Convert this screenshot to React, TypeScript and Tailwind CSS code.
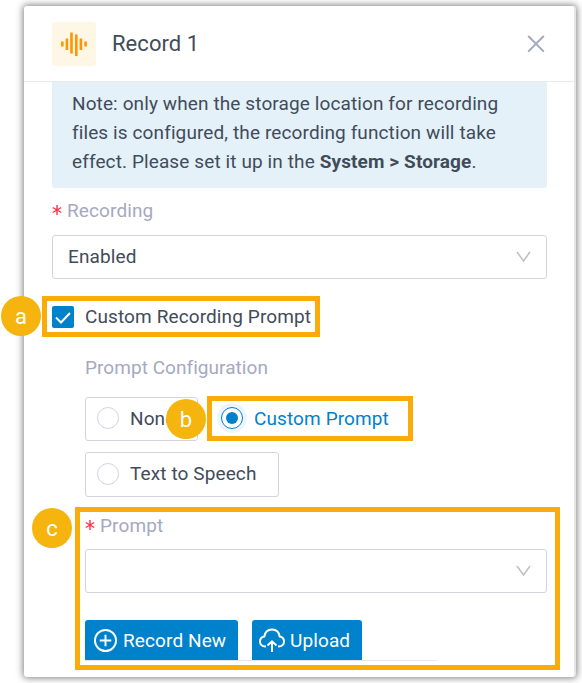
import type { ReactNode } from "react";

function Badge({ children, className }: { children: string; className: string }) {
  return (
    <span className={`absolute flex size-10 items-center justify-center rounded-full bg-[#f5b40e] pt-px text-[22px] leading-none tracking-normal text-white ${className}`}>
      {children}
    </span>
  );
}

function Highlight({ className }: { className: string }) {
  return <div className={`pointer-events-none absolute border-[5px] border-[#f9ab0a] ${className}`} />;
}

function Label({ children }: { children: string }) {
  return (
    <div className="flex h-7 items-center pb-[2px] text-[#a5a9bf]">
      <svg viewBox="0 0 10 10" className="mr-[5px] size-[10px] fill-none stroke-[#ff3347] stroke-[1.4]">
        <path d="M5 0v10M.7 2.5l8.6 5M.7 7.5l8.6-5" />
      </svg>
      {children}
    </div>
  );
}

function Select({ value }: { value: string }) {
  return (
    <div className="flex h-11 items-center justify-between rounded-[3px] border border-[#d4d4e1] pr-[15px] pl-[15px]">
      <span className="pb-[2px]">{value}</span>
      <svg viewBox="0 0 15 12" className="h-3 w-[15px] fill-none stroke-[#bfbfc2] stroke-[1.5]">
        <path d="M1 1l6.5 9L14 1" />
      </svg>
    </div>
  );
}

function Radio({ children, checked = false, className }: { children: string; checked?: boolean; className: string }) {
  return (
    <div className={`flex items-center rounded-[3px] border pl-[11px] ${checked ? "border-transparent text-[#0081cc]" : "border-[#d4d4e1] pb-[2px]"} ${className}`}>
      <span className={`mr-[11px] flex size-[22px] shrink-0 items-center justify-center rounded-full border bg-white ${checked ? "border-[#0081cc] ring-4 ring-[#ebf5ff]" : "border-[#d4d4e1]"}`}>
        {checked && <span className="size-3 rounded-full bg-[#0081cc]" />}
      </span>
      {children}
    </div>
  );
}

function Button({ icon, children, className }: { icon: ReactNode; children: string; className: string }) {
  return (
    <button className={`flex h-10 items-center rounded-t-[3px] bg-[#0081cc] text-white ${className}`}>
      {icon}
      {children}
    </button>
  );
}

export default function App() {
  return (
    <div className="relative h-[683px] w-[582px] overflow-hidden bg-white pt-[6px] pl-6 font-['Roboto',sans-serif] text-[19px] leading-[29px] tracking-[0.11px] text-[#424b5a]">
      <section className="h-[671px] w-[552px] rounded-[3px] border-r-2 border-[#e6e6e7] bg-white shadow-[0_0_7px_1px_rgba(0,0,0,0.5)]">
        <header className="flex h-[76px] items-center border-b border-[#e9e9ee] pr-[30px] pl-7">
          <div className="mr-4 flex size-11 items-center justify-center rounded-[3px] bg-[#fff7e6]">
            <svg viewBox="0 0 26 24" className="h-6 w-[26px] fill-[#ff9500]">
              <path d="M0 9.500h2.600v5H0zM4.600 6.500h2.600v11.500H4.600zM9.200.5h2.600v21H9.200zM14 2.500h2.600v21.500H14zM18.600 6.500h2.600v11.500h-2.600zM23.300 9.500h2.600v5h-2.600z" />
            </svg>
          </div>
          <h1 className="flex-1 text-[22px] tracking-[0.05px]">Record 1</h1>
          <svg viewBox="0 0 16 16" className="size-4 overflow-visible fill-none stroke-[#a5a9bf] stroke-2">
            <path d="M.2 0l15.600 15.600m0-15.600l-15.600 15.600" />
          </svg>
        </header>
        <main className="pr-[27px] pl-7">
          <p className="h-[106px] rounded-b-[3px] bg-[#e4f1f9] pt-[7px] pl-5">
            Note: only when the storage location for recording<br />
            files is configured, the recording function will take<br />
            effect. Please set it up in the <b className="font-bold">System &gt; Storage</b>.
          </p>
          <div className="pt-[9px] pb-[10px]"><Label>Recording</Label></div>
          <Select value="Enabled" />
          <div className="mt-[27px] flex h-[22px] items-center">
            <span className="mr-[11px] flex size-[22px] items-center justify-center rounded-[2px] bg-[#0081cc]">
              <svg viewBox="0 0 16 12" className="mt-px h-3 w-4 fill-none stroke-white stroke-[2]">
                <path d="M1 5.500l5 5L15 1" />
              </svg>
            </span>
            <span className="pb-[2px]">Custom Recording Prompt</span>
          </div>
          <div className="pt-[26px] pl-[33px]">
            <div className="h-7 leading-7 tracking-[0.05px] text-[#a5a9bf]">Prompt Configuration</div>
            <div className="mt-[15px] flex">
              <Radio className="h-11 w-[113px]">None</Radio>
              <Radio checked className="ml-[11px] h-[42px] w-[190px]">Custom Prompt</Radio>
            </div>
            <Radio className="mt-[11px] h-[45px] w-[194px]">Text to Speech</Radio>
            <div className="pt-[15px] pb-[9px]"><Label>Prompt</Label></div>
            <Select value="" />
            <div className="mt-[27px] flex w-[352px] gap-[14px] border-b border-[#e5e5ed]">
              <Button
                className="w-[153px] pl-[9px]"
                icon={
                  <svg viewBox="0 0 24 24" className="mr-[6px] size-[23px] fill-none stroke-white stroke-2">
                    <circle cx="12" cy="12" r="11" />
                    <path d="M12 6v12M6 12h12" />
                  </svg>
                }
              >
                Record New
              </Button>
              <Button
                className="w-[110px] pl-[7px]"
                icon={
                  <svg viewBox="0 0 26 24" className="mr-[5px] h-6 w-[26px] fill-none stroke-white stroke-2">
                    <path d="M7 18.500H6.500C3 18.500 1 16.300 1 13.500c0-2.600 1.700-4.500 4.300-5C6 4.300 9 1.500 13 1.500s7 2.800 7.700 7c2.600.5 4.300 2.400 4.300 5 0 2.800-2 5-5.500 5H19M13 24V13.500M8.500 17.500l4.500-4.200 4.500 4.200" />
                  </svg>
                }
              >
                Upload
              </Button>
            </div>
          </div>
        </main>
      </section>
      <Highlight className="top-[296px] left-[42px] h-[41px] w-[278px]" />
      <Highlight className="top-[396px] left-[207px] h-[45px] w-[206px]" />
      <Highlight className="top-[507px] left-[75px] h-[163px] w-[485px]" />
      <Badge className="top-[296px] left-px">a</Badge>
      <Badge className="top-[399px] left-[166px]">b</Badge>
      <Badge className="top-[508px] left-8">c</Badge>
    </div>
  );
}
